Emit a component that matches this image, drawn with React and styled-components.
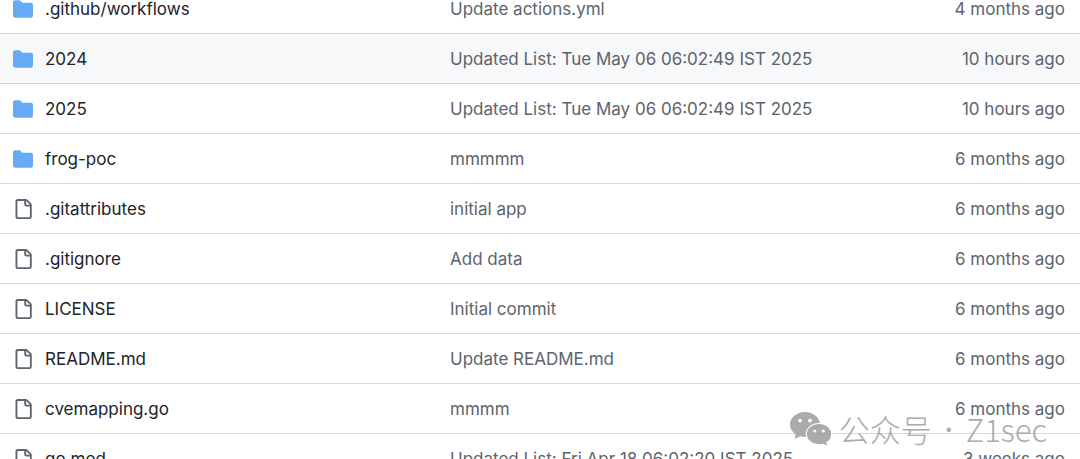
import React from "react";
import styled, { createGlobalStyle } from "styled-components";

const colors = {
  text: "#202428",
  muted: "#5c646c",
  border: "#d5d9de",
  hover: "#f6f8fa",
  folder: "#66aaf6",
  watermark: "#a2a2a2",
};

const GlobalStyle = createGlobalStyle`
  body {
    margin: 0;
    background-color: #ffffff;
    font-family: Inter, "Liberation Sans", sans-serif;
  }
`

const PageWrapper = styled.main`
  position: relative;
  height: 100vh;
  overflow: hidden;
`
const FilesTable = styled.table`
  width: 100%;
  margin-top: -16px;
  border-collapse: separate;
  border-spacing: 0;
  table-layout: fixed;
  font-size: 17px;
  line-height: 24px;
`
const FileRow = styled.tr`
  background-color: ${({ $isActive }) => ($isActive ? colors.hover : "transparent")};
`
const Cell = styled.td`
  height: 49px;
  padding: 0;
  border-bottom: 1px solid ${colors.border};
  color: ${colors.muted};
  white-space: nowrap;
`
const NameCell = styled(Cell)`
  width: 450px;
`
const AgeCell = styled(Cell)`
  width: 160px;
  padding-right: 15px;
  text-align: right;
`
const FileName = styled.div`
  display: flex;
  align-items: center;
  gap: 12px;
  padding-left: 13px;
`
const Icon = styled.svg`
  flex: none;
  width: 20px;
  height: 20px;
  fill: ${({ $isFolder }) => ($isFolder ? colors.folder : colors.muted)};
`
const FileLink = styled.a`
  color: ${colors.text};
  text-decoration: none;
`
const MessageLink = styled.a`
  color: inherit;
  text-decoration: none;
`
const Watermark = styled.div`
  position: absolute;
  right: 33px;
  bottom: 10px;
  display: flex;
  align-items: center;
  gap: 7px;
  color: ${colors.watermark};
  font-family: "Noto Sans CJK SC", sans-serif;
  font-size: 31px;
  font-weight: 300;
  line-height: 40px;
  white-space: nowrap;
  opacity: 0.9;
`
const Logo = styled.svg`
  width: 42px;
  height: 35px;
  fill: ${colors.watermark};
`
const Dot = styled.span`
  width: 20px;
  font-family: "Noto Sans", sans-serif;
  font-weight: 500;
  text-align: center;
`

const files = [
  { name: ".github/workflows", message: "Update actions.yml", age: "4 months ago", isFolder: true },
  { name: "2024", message: "Updated List: Tue May 06 06:02:49 IST 2025", age: "10 hours ago", isFolder: true, isActive: true },
  { name: "2025", message: "Updated List: Tue May 06 06:02:49 IST 2025", age: "10 hours ago", isFolder: true },
  { name: "frog-poc", message: "mmmmm", age: "6 months ago", isFolder: true },
  { name: ".gitattributes", message: "initial app", age: "6 months ago" },
  { name: ".gitignore", message: "Add data", age: "6 months ago" },
  { name: "LICENSE", message: "Initial commit", age: "6 months ago" },
  { name: "README.md", message: "Update README.md", age: "6 months ago" },
  { name: "cvemapping.go", message: "mmmm", age: "6 months ago" },
  { name: "go.mod", message: "Updated List: Fri Apr 18 06:02:20 IST 2025", age: "3 weeks ago" },
];

function FolderIcon() {
  return (
    <Icon $isFolder viewBox="0 0 16 16" aria-hidden="true">
      <path d="M1.75 1A1.75 1.75 0 0 0 0 2.75v10.5C0 14.216.784 15 1.75 15h12.5A1.75 1.75 0 0 0 16 13.25v-8.5A1.75 1.75 0 0 0 14.25 3H7.5a.25.25 0 0 1-.2-.1l-.9-1.2C6.07 1.26 5.55 1 5 1H1.75Z" />
    </Icon>
  );
}

function FileIcon() {
  return (
    <Icon viewBox="0 0 16 16" aria-hidden="true">
      <path d="M2 1.75C2 .784 2.784 0 3.75 0h6.586c.464 0 .909.184 1.237.513l2.914 2.914c.329.328.513.773.513 1.237v9.586A1.75 1.75 0 0 1 13.25 16h-9.5A1.75 1.75 0 0 1 2 14.25Zm1.75-.25a.25.25 0 0 0-.25.25v12.5c0 .138.112.25.25.25h9.5a.25.25 0 0 0 .25-.25V6h-2.75A1.75 1.75 0 0 1 9 4.25V1.5Zm6.75.062V4.25c0 .138.112.25.25.25h2.688l-.011-.013-2.914-2.914-.013-.011Z" />
    </Icon>
  );
}

function ChatLogo() {
  return (
    <Logo viewBox="0 0 42 35" aria-hidden="true">
      <path d="M15 0C6.7 0 0 5.6 0 12.6c0 4 2.200 7.500 5.600 9.800L4.800 27l5.200-2.700c1.600.5 3.300.7 5 .7 8.300 0 15-5.500 15-12.400S23.300 0 15 0z" />
      <path
        d="M29 11.500c-7.100 0-12.800 4.700-12.800 10.700S21.900 32.900 29 32.900c1.500 0 2.900-.2 4.200-.6l4.500 2.400-.8-4.100c3-1.900 4.900-5 4.900-8.400 0-6-5.700-10.700-12.800-10.700z"
        stroke="#ffffff"
        strokeWidth="1.2"
      />
      <g fill="#ffffff">
        <circle cx="10" cy="8.600" r="1.900" />
        <circle cx="20" cy="8.600" r="1.900" />
        <circle cx="24.800" cy="19" r="1.600" />
        <circle cx="33.200" cy="19" r="1.600" />
      </g>
    </Logo>
  );
}

function App() {
  return (
    <PageWrapper>
      <GlobalStyle />
      <FilesTable>
        <tbody>
          {files.map(({ name, message, age, isFolder, isActive }) => (
            <FileRow key={name} $isActive={isActive}>
              <NameCell>
                <FileName>
                  {isFolder ? <FolderIcon /> : <FileIcon />}
                  <FileLink href="#">{name}</FileLink>
                </FileName>
              </NameCell>
              <Cell>
                <MessageLink href="#">{message}</MessageLink>
              </Cell>
              <AgeCell>{age}</AgeCell>
            </FileRow>
          ))}
        </tbody>
      </FilesTable>
      <Watermark>
        <ChatLogo />
        <span>公众号</span>
        <Dot>·</Dot>
        <span>Z1sec</span>
      </Watermark>
    </PageWrapper>
  );
}

export default App;
